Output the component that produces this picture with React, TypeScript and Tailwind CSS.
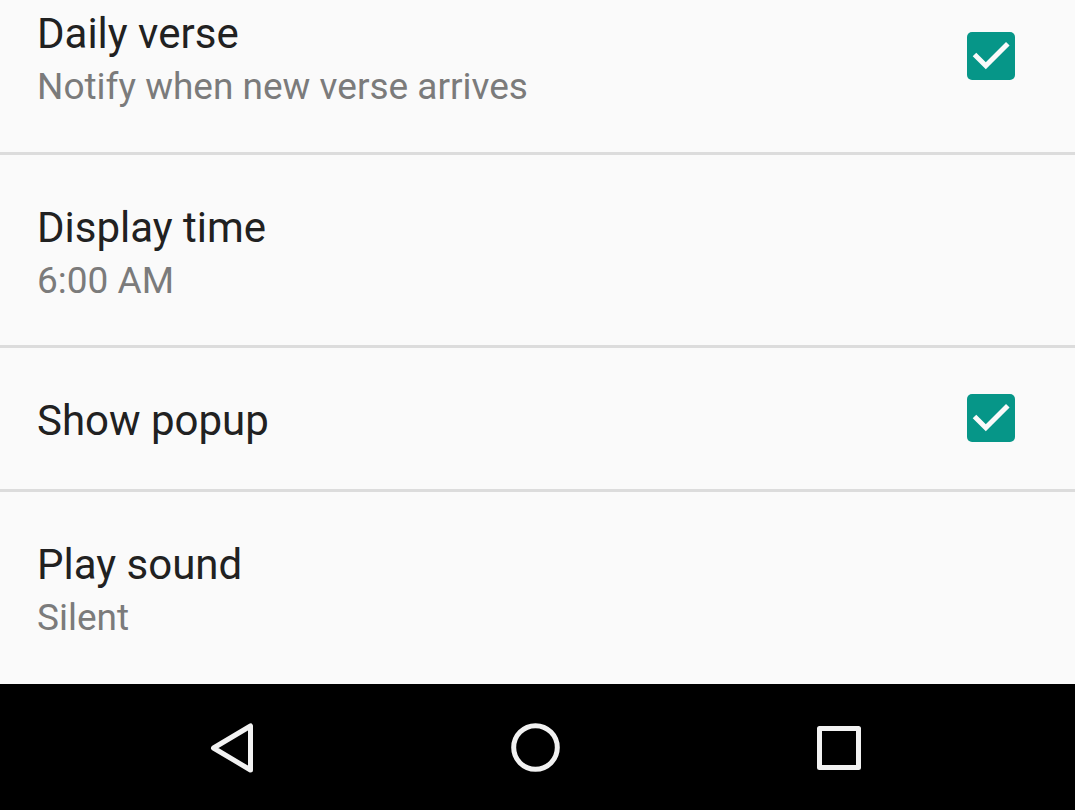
import { useState } from "react";

type CheckProps = { id: string };

function CheckMark({ id }: CheckProps) {
  const [checked, setChecked] = useState(true);
  return (
    <span className="grid size-12 shrink-0 place-items-center">
      <input
        id={id}
        type="checkbox"
        checked={checked}
        onChange={(e) => setChecked(e.target.checked)}
        className="peer col-start-1 row-start-1 size-12 appearance-none rounded-[5px] border-4 border-[#757575] checked:border-0 checked:bg-[#069688]"
      />
      <svg
        viewBox="0 0 48 48"
        className="pointer-events-none col-start-1 row-start-1 hidden size-12 peer-checked:block"
        fill="none"
        stroke="#fafafa"
        strokeWidth="5"
      >
        <path d="M7.5 22.5 18.8 33.8 40.8 11.8" />
      </svg>
    </span>
  );
}

export default function App() {
  const title = "block text-[42px] leading-[50px] text-[#212121]";
  const summary = "block text-[37px] leading-[56px] text-[#7b7b7b]";
  return (
    <div className="flex min-h-screen flex-col bg-[#fafafa] font-['Roboto',sans-serif]">
      <main className="flex-1 divide-y-3 divide-[#dcdcdc]">
        <div className="flex items-start justify-between pt-[9px] pr-15 pb-[37px] pl-[37px]">
          <label htmlFor="daily">
            <span className={title}>Daily verse</span>
            <span className={summary}>Notify when new verse arrives</span>
          </label>
          <span className="pt-[23px]">
            <CheckMark id="daily" />
          </span>
        </div>
        <button type="button" className="block w-full pt-12 pr-15 pb-9 pl-[37px] text-left">
          <span className={title}>Display time</span>
          <span className={summary}>6:00 AM</span>
        </button>
        <div className="flex items-center justify-between pt-[42px] pr-15 pb-[43px] pl-[37px]">
          <label htmlFor="popup" className="pt-[6px]">
            <span className={title}>Show popup</span>
          </label>
          <CheckMark id="popup" />
        </div>
        <button type="button" className="block w-full pt-12 pr-15 pb-9 pl-[37px] text-left">
          <span className={title}>Play sound</span>
          <span className={summary}>Silent</span>
        </button>
      </main>
      <nav className="flex h-[126px] items-center justify-between bg-black pr-53 pl-52">
        <button type="button" aria-label="Back">
          <svg viewBox="0 0 52 52" className="size-[52px]" fill="none" stroke="#f2f2f2" strokeWidth="5" strokeLinejoin="round">
            <path d="M42.5 5V49L5.5 27Z" />
          </svg>
        </button>
        <button type="button" aria-label="Home">
          <svg viewBox="0 0 52 52" className="size-[52px]" fill="none" stroke="#f2f2f2" strokeWidth="5">
            <circle cx="25.5" cy="26.5" r="21.8" />
          </svg>
        </button>
        <button type="button" aria-label="Recent apps">
          <svg viewBox="0 0 52 52" className="size-[52px]" fill="none" stroke="#f2f2f2" strokeWidth="5" strokeLinejoin="round">
            <rect x="8.5" y="7.5" width="39" height="39" />
          </svg>
        </button>
      </nav>
    </div>
  );
}
